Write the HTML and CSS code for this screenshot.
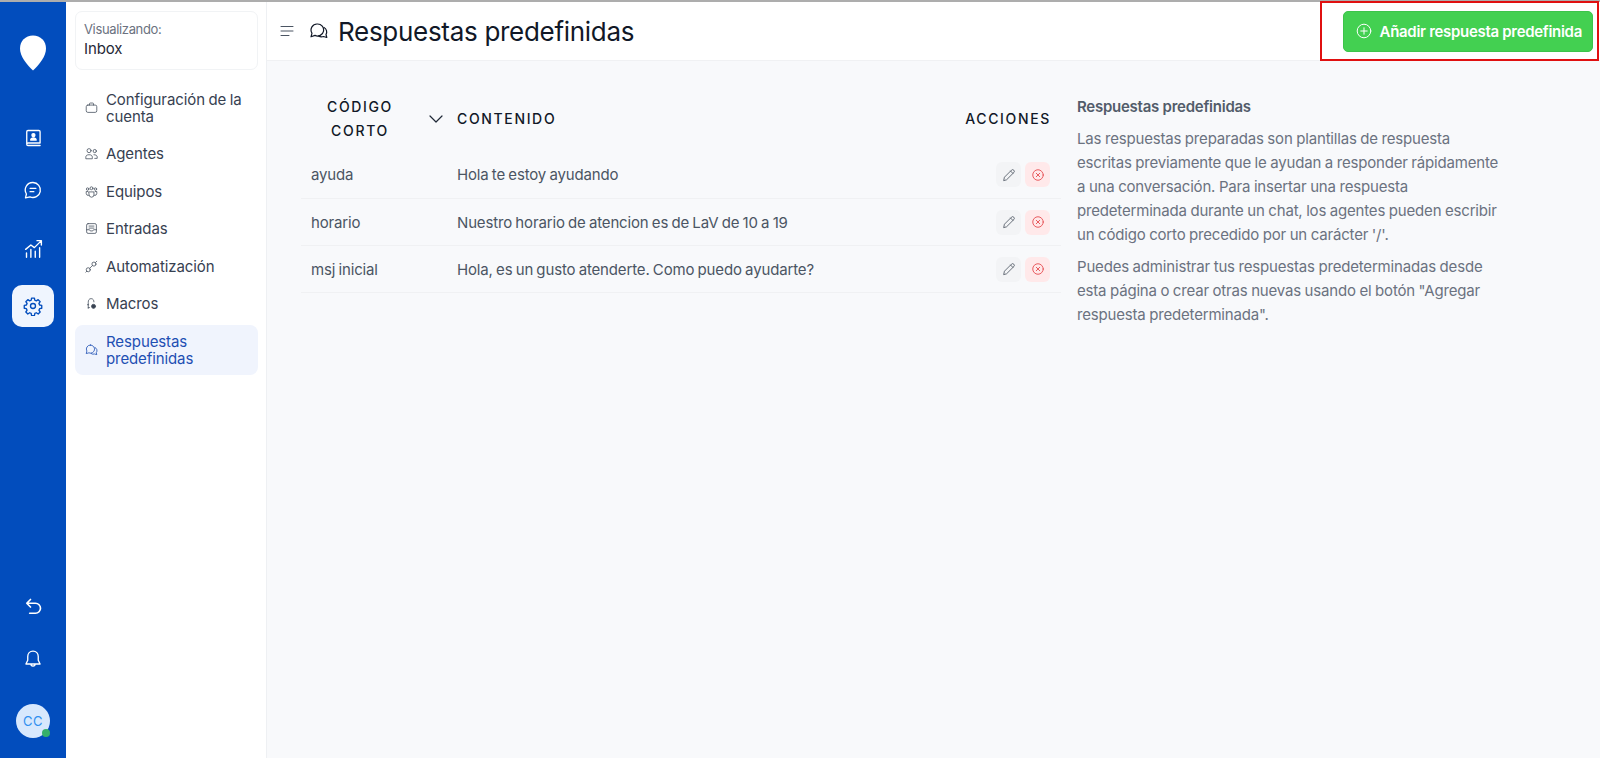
FILE: index.html
```html
<!DOCTYPE html>
<html lang="es">
<head>
<meta charset="utf-8">
<title>Respuestas predefinidas</title>
<link rel="stylesheet" href="styles.css">
</head>
<body>
<div class="topline"></div>
<div class="app">
  <nav class="rail">
    <div class="logo">
      <svg width="28" height="36" viewBox="0 0 28 36"><path d="M14 .5C6.400.5 1 6 1 13.500c0 7.800 6.800 16.300 13 22 6.200-5.700 13-14.200 13-22C27 6 21.600.5 14 .5z" fill="#fff"/></svg>
    </div>
    <div class="rail-list">
      <a class="rail-item"><svg class="ic" viewBox="0 0 24 24"><path d="M4.500 19.500V4.500A1.500 1.500 0 0 1 6 3h13a1.500 1.500 0 0 1 1.500 1.500V18H6a1.500 1.500 0 0 0-1.500 1.500zm0 0A1.500 1.500 0 0 0 6 21h14.500"/><circle cx="12.500" cy="8.500" r="1.800" fill="#fff"/><path d="M9.200 14.500c.3-1.800 1.600-2.500 3.300-2.500s3 .7 3.300 2.500z" fill="#fff"/></svg></a>
      <a class="rail-item rail-chat"><svg class="ic" viewBox="0 0 24 24"><path d="M12 3a9 9 0 1 1-3.600 17.300L3 21.500l1.100-4.700A9 9 0 0 1 12 3z"/><path d="M8.500 10h7M8.500 14h4.500"/></svg></a>
      <a class="rail-item rail-chart"><svg class="ic ic-lg" viewBox="0 0 24 24"><path d="M3 13l6-5 4 3 8-8M16 3h5v5M4 17v5M9 13v9M14 15v7M19 11v11"/></svg></a>
      <a class="rail-item rail-active"><svg class="ic" viewBox="0 0 24 24"><circle cx="12" cy="12" r="3"/><path d="M10.300 2.500h3.400l.5 2.600 1.800.8 2.200-1.500 2.400 2.400-1.500 2.200.8 1.800 2.600.5v3.400l-2.600.5-.8 1.800 1.500 2.200-2.400 2.400-2.200-1.500-1.800.8-.5 2.600h-3.400l-.5-2.600-1.800-.8-2.200 1.500-2.400-2.400 1.500-2.200-.8-1.800-2.600-.5v-3.400l2.600-.5.800-1.800-1.500-2.200 2.400-2.400 2.200 1.500 1.800-.8z"/></svg></a>
    </div>
    <div class="rail-bottom">
      <a class="rail-tool"><svg class="ic ic-bold" viewBox="0 0 24 24"><path d="M9 3L4.500 7.500 9 12M4.500 7.500H15a5.500 5.500 0 0 1 0 12H8"/></svg></a>
      <a class="rail-tool rail-bell"><svg class="ic" viewBox="0 0 24 24"><path d="M12 2.500c-3.800 0-6.300 3-6.300 6.500v4.500L3.500 18h17l-2.200-4.500V9c0-3.500-2.500-6.500-6.300-6.500zM9.500 18a2.500 2.500 0 0 0 5 0"/></svg></a>
      <div class="avatar">CC<span class="status"></span></div>
    </div>
  </nav>
  <aside class="side">
    <div class="viewing">
      <div class="viewing-label">Visualizando:</div>
      <div class="viewing-name">Inbox</div>
    </div>
    <ul class="menu">
      <li class="menu-item"><svg class="mi" viewBox="0 0 16 16"><rect x="1.500" y="5" width="13" height="9" rx="2"/><path d="M5.500 5V3.500a1 1 0 0 1 1-1h3a1 1 0 0 1 1 1V5"/></svg><span>Configuración de la cuenta</span></li>
      <li class="menu-item"><svg class="mi" viewBox="0 0 16 16"><circle cx="5" cy="4.500" r="2.500"/><circle cx="12" cy="5" r="2"/><path d="M1 14v-1.500C1 10.500 2.500 9.500 5 9.500s4 1 4 3V14zM11 9.500c2.500 0 4 1 4 2.800V14h-3"/></svg><span>Agentes</span></li>
      <li class="menu-item"><svg class="mi" viewBox="0 0 16 16"><circle cx="8" cy="4" r="1.800"/><circle cx="3.200" cy="5" r="1.500"/><circle cx="12.800" cy="5" r="1.500"/><path d="M5 8.500h6v3.500a3 3 0 0 1-6 0zM3.500 8H1.500v2.500a2.500 2.500 0 0 0 3 2.300M12.500 8h2v2.500a2.500 2.500 0 0 1-3 2.300"/></svg><span>Equipos</span></li>
      <li class="menu-item"><svg class="mi" viewBox="0 0 16 16"><rect x="2" y="2" width="12" height="12" rx="1.800"/><path d="M2 9.500h3.500l1 1.500h3l1-1.500H14M5 5h6M5 7.500h6"/></svg><span>Entradas</span></li>
      <li class="menu-item"><svg class="mi" viewBox="0 0 16 16"><circle cx="4" cy="12" r="2.500"/><circle cx="11" cy="5" r="2.500"/><path d="M5.800 10.200l3.400-3.400M13 3l1.500-1.500M1 15l1.200-1.200"/></svg><span>Automatización</span></li>
      <li class="menu-item"><svg class="mi" viewBox="0 0 16 16"><path d="M4 14V6.500C4 4 5 2 7.500 2S11 4 11 6M4.500 9.500H3M5.500 13H4"/><circle cx="10.500" cy="11.500" r="2.500" fill="#374151"/></svg><span>Macros</span></li>
      <li class="menu-item menu-active"><svg class="mi" viewBox="0 0 16 16"><path d="M6.800 2.500a5 5 0 1 1-2 9.600L1.500 13l.8-3.100a5 5 0 0 1 4.500-7.400z"/><path d="M12.300 5.500a4 4 0 0 1 1.600 6.300l.6 2.500-2.800-.8a4.500 4.500 0 0 1-4.200-.5"/></svg><span>Respuestas predefinidas</span></li>
    </ul>
  </aside>
  <div class="content">
    <header class="topbar">
      <div class="heading">
        <svg class="burger" viewBox="0 0 14 12"><path d="M1 1.500h12M1 6h12M1 10.500h8"/></svg>
        <svg class="title-ic" viewBox="0 0 18 16"><path d="M7.500 1a6 6 0 1 1-2.500 11.400L1 13.800l1-3.600A6 6 0 0 1 7.500 1z"/><path d="M14 4.500a5 5 0 0 1 2 7l.8 3-3.300-1a5.500 5.500 0 0 1-5-.5"/></svg>
        <h1>Respuestas predefinidas</h1>
      </div>
      <div class="highlight">
        <button class="add-btn"><svg class="plus" viewBox="0 0 16 16"><circle cx="8" cy="8" r="6.800"/><path d="M8 4.800v6.400M4.800 8h6.400"/></svg>Añadir respuesta predefinida</button>
      </div>
    </header>
    <main class="body">
      <table class="table">
        <colgroup><col class="c-code"><col class="c-text"><col class="c-act"></colgroup>
        <thead>
          <tr>
            <th class="th-code"><div class="th-wrap"><span class="th-label">CÓDIGO CORTO</span><svg class="chev" viewBox="0 0 14 8"><path d="M1 1l6 6 6-6"/></svg></div></th>
            <th>CONTENIDO</th>
            <th class="th-act">ACCIONES</th>
          </tr>
        </thead>
        <tbody>
          <tr>
            <td>ayuda</td><td>Hola te estoy ayudando</td>
            <td><div class="acts"><a class="act act-edit"><svg viewBox="0 0 16 16"><path d="M2 14l.8-3.500L10.800 2.500a1.500 1.500 0 0 1 2.700 2.700L5.500 13.200zM9.800 3.500l2.700 2.700"/></svg></a><a class="act act-del"><svg viewBox="0 0 16 16"><circle cx="8" cy="8" r="6"/><path d="M6 6l4 4M10 6l-4 4"/></svg></a></div></td>
          </tr>
          <tr>
            <td>horario</td><td>Nuestro horario de atencion es de LaV de 10 a 19</td>
            <td><div class="acts"><a class="act act-edit"><svg viewBox="0 0 16 16"><path d="M2 14l.8-3.500L10.800 2.500a1.500 1.500 0 0 1 2.700 2.700L5.500 13.200zM9.800 3.500l2.700 2.700"/></svg></a><a class="act act-del"><svg viewBox="0 0 16 16"><circle cx="8" cy="8" r="6"/><path d="M6 6l4 4M10 6l-4 4"/></svg></a></div></td>
          </tr>
          <tr>
            <td>msj inicial</td><td>Hola, es un gusto atenderte. Como puedo ayudarte?</td>
            <td><div class="acts"><a class="act act-edit"><svg viewBox="0 0 16 16"><path d="M2 14l.8-3.500L10.800 2.500a1.500 1.500 0 0 1 2.700 2.700L5.500 13.200zM9.800 3.500l2.700 2.700"/></svg></a><a class="act act-del"><svg viewBox="0 0 16 16"><circle cx="8" cy="8" r="6"/><path d="M6 6l4 4M10 6l-4 4"/></svg></a></div></td>
          </tr>
        </tbody>
      </table>
      <section class="info">
        <h2>Respuestas predefinidas</h2>
        <p>Las respuestas preparadas son plantillas de respuesta<br>escritas previamente que le ayudan a responder rápidamente<br>a una conversación. Para insertar una respuesta<br>predeterminada durante un chat, los agentes pueden escribir<br>un código corto precedido por un carácter '/'.</p>
        <p>Puedes administrar tus respuestas predeterminadas desde<br>esta página o crear otras nuevas usando el botón "Agregar<br>respuesta predeterminada".</p>
      </section>
    </main>
  </div>
</div>
</body>
</html>
```
FILE: styles.css
```css
* { box-sizing: border-box; }
html, body { height: 100%; }
body {
  margin: 0;
  overflow: hidden;
  display: flex;
  flex-direction: column;
  background: #fff;
  font-family: Inter, "Liberation Sans", sans-serif;
  color: #374151;
}
.topline { height: 2px; flex: none; background: #adadad; }
.app { flex: 1; min-height: 0; display: flex; }

/* Icon rail */
.rail { width: 66px; flex: none; background: #024dbd; display: flex; flex-direction: column; align-items: center; }
.logo { margin-top: 33px; height: 36px; display: flex; }
.rail-list { margin-top: 46px; display: flex; flex-direction: column; align-items: center; gap: 14px; }
.rail-item { width: 42px; height: 42px; border-radius: 10px; display: flex; align-items: center; justify-content: center; color: #fff; }
.rail-chat { margin-top: -4px; }
.rail-chart { margin-top: 2px; }
.rail-active { margin-top: 2px; background: #eff5fe; color: #024dbd; }
.ic { width: 20px; height: 20px; fill: none; stroke: currentColor; stroke-width: 1.600; stroke-linecap: round; stroke-linejoin: round; }
.ic-lg { width: 21px; height: 21px; }
.ic-bold { stroke-width: 2; }
.rail-bottom { margin-top: auto; display: flex; flex-direction: column; align-items: center; }
.rail-tool { width: 42px; height: 20px; display: flex; align-items: center; justify-content: center; color: #fff; }
.rail-bell { margin-top: 32px; }
.avatar { position: relative; margin-top: 35px; margin-bottom: 20px; width: 34px; height: 34px; border-radius: 50%; background: #d7e8fd; color: #2f8ff0; font-size: 13px; letter-spacing: .5px; display: flex; align-items: center; justify-content: center; }
.status { position: absolute; right: 0; bottom: 1px; width: 8px; height: 8px; border-radius: 50%; background: #35b06a; }

/* Secondary sidebar */
.side { width: 201px; flex: none; background: #fff; border-right: 1px solid #eef0f3; padding: 9px 8px 0 9px; }
.viewing { height: 59px; border: 1px solid #f1f3f5; border-radius: 7px; padding: 9px 8px; }
.viewing-label { font-size: 13px; line-height: 17px; color: #6b7280; letter-spacing: -.35px; }
.viewing-name { margin-top: 1px; font-size: 15px; line-height: 20px; color: #1f2937; letter-spacing: -.1px; }
.menu { list-style: none; margin: 12.500px 0 0; padding: 0; display: flex; flex-direction: column; gap: 4px; }
.menu-item { display: flex; align-items: center; gap: 8px; padding: 8.250px 8px 8.250px 10px; border-radius: 8px; font-size: 15px; line-height: 17px; letter-spacing: -.1px; word-spacing: -.6px; color: #374151; }
.menu-active { background: #f0f4fd; color: #1e4fb3; }
.mi { width: 13px; height: 13px; flex: none; fill: none; stroke: #4b5563; stroke-width: 1; stroke-linecap: round; stroke-linejoin: round; }
.menu-active .mi { stroke: #1e4fb3; }

/* Content */
.content { flex: 1; min-width: 0; display: flex; flex-direction: column; background: #f8f9fb; }
.topbar { height: 59px; flex: none; display: flex; justify-content: space-between; background: #fff; border-bottom: 1px solid #f0f1f3; }
.heading { display: flex; align-items: center; padding-left: 13px; }
.burger { width: 14px; height: 12px; fill: none; stroke: #4b5563; stroke-width: 1; stroke-linecap: round; margin-right: 16px; }
.title-ic { width: 18px; height: 16px; fill: none; stroke: #111827; stroke-width: 1.200; stroke-linecap: round; stroke-linejoin: round; margin-right: 10px; }
h1 { margin: 0; font-size: 26px; font-weight: 400; letter-spacing: -.3px; color: #111827; }
.highlight { display: flex; align-items: center; margin: -1px 1px -1px 0; padding: 0 4px 0 21px; border: 2px solid #e01010; }
.add-btn { display: flex; align-items: center; gap: 8px; height: 41px; padding: 0 10px 0 12px; border: 1px solid #3cc44a; border-radius: 5px; background: #43d051; color: #fff; font-family: inherit; font-size: 15px; font-weight: 600; letter-spacing: -.3px; white-space: nowrap; }
.plus { width: 16px; height: 16px; fill: none; stroke: #fff; stroke-width: 1; stroke-linecap: round; }
.body { flex: 1; display: flex; align-items: flex-start; padding: 26px 0 0 34px; }

/* Table */
.table { width: 760px; flex: none; table-layout: fixed; border-collapse: collapse; }
.c-code { width: 156px; }
.c-act { width: 130px; }
th { height: 64px; padding: 8px 0; text-align: left; font-size: 14px; line-height: 24px; font-weight: 500; letter-spacing: 1.650px; color: #111827; }
.th-wrap { display: flex; align-items: center; }
.th-label { width: 118px; text-align: center; }
.chev { width: 14px; height: 8px; margin-left: 10px; fill: none; stroke: #1f2937; stroke-width: 1.200; stroke-linecap: round; stroke-linejoin: round; }
.th-act { text-align: right; padding-right: 10px; }
td { height: 47px; padding: 1px 0 0; border-bottom: 1px solid #f0f1f3; font-size: 15px; letter-spacing: -.15px; word-spacing: -.8px; color: #4b5563; }
td:first-child { padding-left: 10px; }
.acts { display: flex; justify-content: flex-end; gap: 4px; padding-right: 11px; }
.act { width: 25px; height: 25px; border-radius: 6px; display: flex; align-items: center; justify-content: center; }
.act svg { width: 14px; height: 14px; fill: none; stroke-width: 1; stroke-linecap: round; stroke-linejoin: round; }
.act-edit { background: #f3f4f6; }
.act-edit svg { stroke: #555d68; }
.act-del { background: #ffe9ea; }
.act-del svg { stroke: #e5484d; }

/* Info */
.info { margin: 8px 0 0 16px; width: 440px; color: #6b7280; font-size: 15px; line-height: 24px; }
h2 { margin: 0 0 8px; font-size: 15px; line-height: 24px; font-weight: 600; letter-spacing: -.25px; color: #525c6a; }
.info p { margin: 0 0 8px; letter-spacing: -.18px; word-spacing: -.4px; }
```
